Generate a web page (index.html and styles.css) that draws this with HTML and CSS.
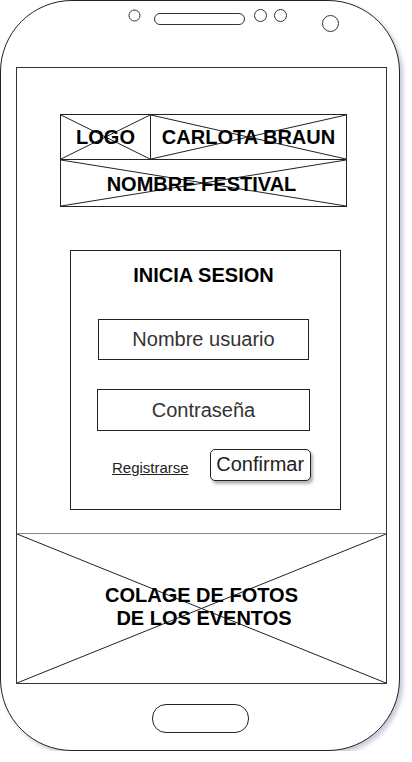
FILE: index.html
```html
<!DOCTYPE html>
<html>
<head>
  <title>Inicia sesion</title>
  <link rel="stylesheet" href="styles.css">
</head>
<body>
  <div class="phone">
    <!-- sensores, altavoz y camara -->
    <svg class="top-bar" width="398" height="66" viewBox="0 0 398 66">
      <g fill="none" stroke="#333" stroke-width="1">
        <circle cx="133.5" cy="14.5" r="5.5"/>
        <rect x="153.5" y="12.5" width="90" height="11" rx="5.5"/>
        <circle cx="259.5" cy="14.5" r="6"/>
        <circle cx="279.5" cy="14.5" r="6"/>
        <circle cx="329.5" cy="22.5" r="8"/>
      </g>
    </svg>

    <div class="screen">
      <div class="header">
        <div class="header-row">
          <div class="placeholder logo">
            <svg class="cross" viewBox="0 0 100 100" preserveAspectRatio="none"><path d="M0 0L100 100M100 0L0 100"/></svg>
            <span>LOGO</span>
          </div>
          <div class="placeholder name">
            <svg class="cross" viewBox="0 0 100 100" preserveAspectRatio="none"><path d="M0 0L100 100M100 0L0 100"/></svg>
            <span>CARLOTA BRAUN</span>
          </div>
        </div>
        <div class="placeholder festival">
          <svg class="cross" viewBox="0 0 100 100" preserveAspectRatio="none"><path d="M0 0L100 100M100 0L0 100"/></svg>
          <span>NOMBRE FESTIVAL</span>
        </div>
      </div>

      <div class="login">
        <h3>INICIA SESION</h3>
        <div class="field user">Nombre usuario</div>
        <div class="field pass">Contraseña</div>
        <div class="actions">
          <a href="#" class="register">Registrarse</a>
          <button class="confirm">Confirmar</button>
        </div>
      </div>

      <div class="placeholder collage">
        <svg class="cross" viewBox="0 0 100 100" preserveAspectRatio="none"><path d="M0 0L100 100M100 0L0 100"/></svg>
        <span>COLAGE DE FOTOS<br><span class="second">DE LOS EVENTOS</span></span>
      </div>
    </div>

    <div class="home"></div>
  </div>
</body>
</html>
```

FILE: styles.css
```css
* {
  box-sizing: border-box;
}
body {
  margin: 0;
  background: #fff;
  font-family: "Liberation Sans", Arial, sans-serif;
  color: #000;
}
.phone {
  width: 400px;
  height: 751px;
  border: 1px solid #222;
  border-radius: 72px;
  background: #fff;
  box-shadow: 3px 3px 4px rgba(70, 80, 130, 0.3);
  display: flex;
  flex-direction: column;
  align-items: flex-start;
}
.top-bar {
  display: block;
}
.screen {
  margin-left: 15px;
  width: 371px;
  height: 617px;
  border: 1px solid #333;
  display: flex;
  flex-direction: column;
}
.placeholder {
  position: relative;
  display: flex;
  align-items: center;
  justify-content: center;
  font-weight: bold;
  font-size: 20px;
  text-align: center;
}
.placeholder span {
  position: relative;
}
.cross {
  position: absolute;
  left: 0;
  top: 0;
  width: 100%;
  height: 100%;
}
.cross path {
  fill: none;
  stroke: #222;
  stroke-width: 1;
  vector-effect: non-scaling-stroke;
}
.header {
  margin: 46px 0 0 43px;
  width: 287px;
  height: 93px;
  border: 1px solid #222;
}
.header-row {
  display: flex;
  height: 45px;
  border-bottom: 1px solid #222;
}
.logo {
  width: 90px;
  border-right: 1px solid #222;
}
.name {
  flex: 1;
}
.festival {
  height: 46px;
  padding-right: 4px;
  padding-top: 3px;
}
.login {
  margin: 43px 0 0 53px;
  width: 271px;
  height: 260px;
  border: 1px solid #222;
  padding-top: 13px;
  padding-right: 4px;
}
.login h3 {
  margin: 0;
  font-size: 20px;
  text-align: center;
  line-height: 23px;
}
.field {
  border: 1px solid #222;
  font-size: 20px;
  color: #333;
  display: flex;
  align-items: center;
  justify-content: center;
}
.user {
  margin: 32px 0 0 27px;
  width: 211px;
  height: 41px;
}
.pass {
  margin: 29px 0 0 26px;
  width: 213px;
  height: 42px;
}
.actions {
  display: flex;
  align-items: center;
  gap: 21px;
  margin: 18px 0 0 41px;
}
.register {
  font-size: 15px;
  color: #222;
  text-decoration: underline;
  padding-top: 5px;
}
.confirm {
  width: 101px;
  height: 32px;
  padding: 0 0 2px;
  border: 1px solid #222;
  border-radius: 5px;
  background: #fff;
  font-family: "Liberation Sans", Arial, sans-serif;
  font-size: 20px;
  color: #222;
  box-shadow: 2px 3px 3px rgba(0, 0, 0, 0.3);
}
.collage {
  margin-top: auto;
  height: 150px;
  border-top: 1px solid #888;
  line-height: 23px;
  padding-bottom: 4px;
}
.collage .second {
  padding-left: 5px;
}
.home {
  margin: 20px 0 0 151px;
  width: 97px;
  height: 29px;
  border: 1px solid #222;
  border-radius: 14px;
}
```
